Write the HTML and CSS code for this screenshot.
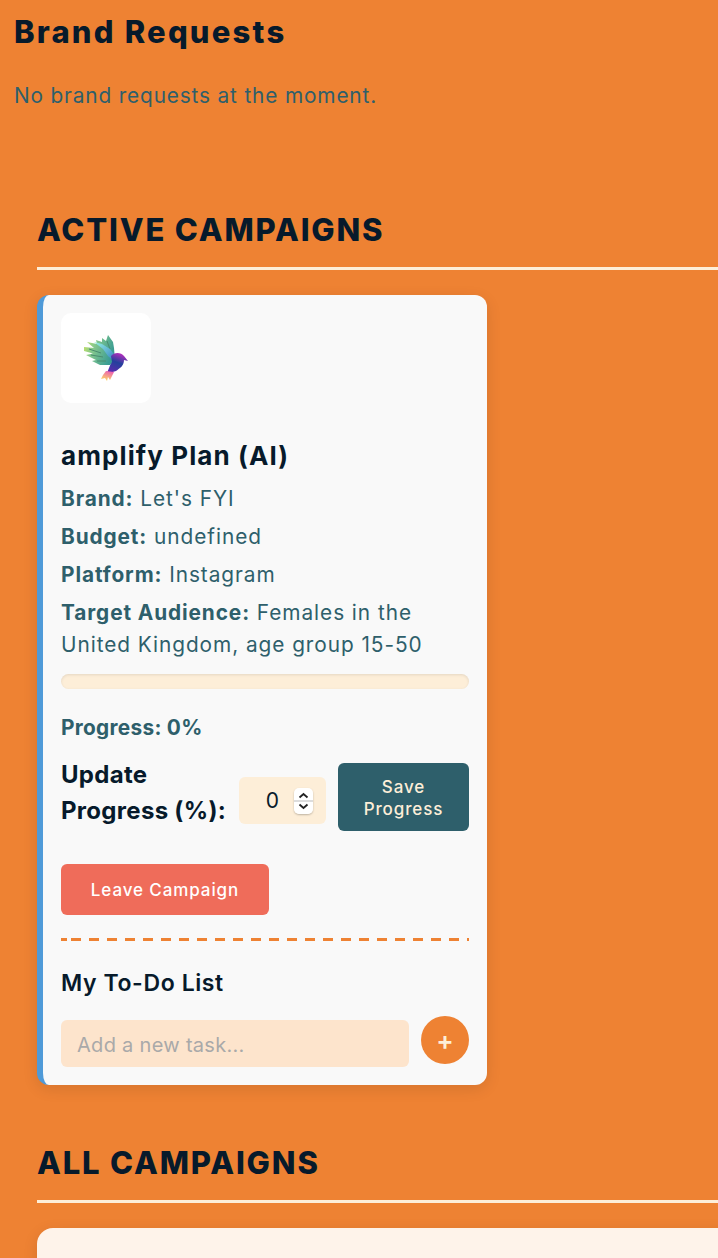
FILE: index.html
```html
<!DOCTYPE html>
<html lang="en">
<head>
    <meta charset="UTF-8">
    <meta name="viewport" content="width=device-width, initial-scale=1.0">
    <title>Influencer Dashboard</title>
    <link rel="stylesheet" href="styles.css">
</head>
<body>
<div class="requests">
    <h2>Brand Requests</h2>
    <p>No brand requests at the moment.</p>
</div>

<section class="section active">
    <h2 class="section-title">ACTIVE CAMPAIGNS</h2>
    <div class="campaign-card">
        <div class="logo">
            <svg width="46" height="46" viewBox="0 0 46 46">
                <defs>
                    <linearGradient id="wing" x1="0" y1="0" x2="1" y2="0.4">
                        <stop offset="0" stop-color="#d8ea5c"/>
                        <stop offset="0.4" stop-color="#86c88c"/>
                        <stop offset="1" stop-color="#3a9c94"/>
                    </linearGradient>
                    <linearGradient id="band" x1="0" y1="0" x2="1" y2="1">
                        <stop offset="0" stop-color="#96f4e4"/>
                        <stop offset="1" stop-color="#2f78c0"/>
                    </linearGradient>
                    <linearGradient id="body" x1="0.7" y1="0" x2="0.3" y2="1">
                        <stop offset="0" stop-color="#c02cc0"/>
                        <stop offset="0.45" stop-color="#23409c"/>
                        <stop offset="1" stop-color="#6428b0"/>
                    </linearGradient>
                    <linearGradient id="tail" x1="0.7" y1="0" x2="0.3" y2="1">
                        <stop offset="0" stop-color="#ec5cb4"/>
                        <stop offset="1" stop-color="#fde060"/>
                    </linearGradient>
                </defs>
                <path fill="url(#wing)" d="M1 12 L11 13 L4 7 L14 9 L13 5 L19 7 L19 3 L23 6 L25 0 L30 7 L31 13 L32 25 L27 30 L17 30 L9 26 L13 25 L3 20 L10 18.500 L1 16 Z"/>
                <path d="M6 14 L18 18 M8 20 L20 22 M14 26 L23 26 M17 9 L25 17 M24 6 L27 14" fill="none" stroke="#4a8c70" stroke-width="1"/>
                <path fill="url(#band)" d="M11 7 L19 9 L27 14 L33 22 L32 27 L25 21 L20 14 Z"/>
                <path fill="url(#body)" d="M28 21 C31 17 38 17 41 21 L45 26 L41 25 C41 31 37 33 33 36 L23 39 C26 35 26 31 29 27 Z"/>
                <path fill="url(#tail)" d="M23 36 L31 37 L29 41 L27 45 L25 42 L24 46 L22 43 L18 44 L20 40 Z"/>
            </svg>
        </div>
        <h3 class="campaign-title">amplify Plan (AI)</h3>
        <p class="detail"><strong>Brand:</strong> Let's FYI</p>
        <p class="detail"><strong>Budget:</strong> undefined</p>
        <p class="detail"><strong>Platform:</strong> Instagram</p>
        <p class="detail"><strong>Target Audience:</strong> Females in the United Kingdom, age group 15-50</p>
        <div class="progress-bar"></div>
        <p class="progress-text">Progress: 0%</p>
        <div class="update-row">
            <label class="update-label" for="progress">Update Progress (%):</label>
            <div class="number-box">
                <input id="progress" class="number-input" type="number" value="0">
                <span class="stepper">
                    <svg width="19" height="26" viewBox="0 0 19 26">
                        <path d="M5.5 9.5 L9.5 6 L13.5 9.5 M5.5 16.5 L9.500 20 L13.5 16.5" fill="none" stroke="#222" stroke-width="1.8"/>
                    </svg>
                </span>
            </div>
            <button class="btn save-btn">Save Progress</button>
        </div>
        <button class="btn leave-btn">Leave Campaign</button>
        <div class="todo">
            <h4 class="todo-title">My To-Do List</h4>
            <div class="todo-row">
                <input class="todo-input" type="text" placeholder="Add a new task...">
                <button class="add-btn">+</button>
            </div>
        </div>
    </div>
</section>

<section class="section all">
    <h2 class="section-title">ALL CAMPAIGNS</h2>
    <div class="all-panel"></div>
</section>
</body>
</html>
```

FILE: styles.css
```css
html, body {
    height: 1258px;
    overflow: hidden;
}

body {
    margin: 0;
    background-color: #ee8233;
    font-family: "Inter", sans-serif;
    color: #2e5f6b;
}

h2, h3, h4, p {
    margin: 0;
}

.requests {
    padding: 10px 14px 0;
}

.requests h2 {
    font-size: 31px;
    line-height: 44px;
    font-weight: 800;
    letter-spacing: 2.2px;
    color: #071a2b;
}

.requests p {
    margin-top: 26px;
    font-size: 20.8px;
    line-height: 32px;
    letter-spacing: 0.85px;
}

.section {
    margin-left: 37px;
}

.active {
    margin-top: 94px;
}

.all {
    margin-top: 54px;
}

.section-title {
    font-size: 31px;
    line-height: 48px;
    font-weight: 800;
    letter-spacing: 1.85px;
    color: #071a2b;
    padding-bottom: 13px;
    border-bottom: 3px solid #fdeed8;
    margin-bottom: 25px;
}

.campaign-card {
    width: 450px;
    box-sizing: border-box;
    padding: 18px;
    border-left: 6px solid #4f9ad8;
    border-radius: 12px;
    background-color: #f9f9f9;
    box-shadow: 0 4px 15px rgba(0, 0, 0, 0.1);
}

.logo {
    width: 90px;
    height: 90px;
    border-radius: 10px;
    background-color: #fff;
    display: flex;
    align-items: center;
    justify-content: center;
}

.campaign-title {
    margin-top: 34px;
    font-size: 26px;
    line-height: 38px;
    font-weight: 700;
    letter-spacing: 1.1px;
    color: #071a2b;
}

.campaign-title + .detail {
    margin-top: 8px;
}

.detail {
    margin-top: 6px;
    font-size: 20.8px;
    line-height: 32px;
    letter-spacing: 0.95px;
}

.detail strong {
    letter-spacing: 0.9px;
}

.progress-bar {
    margin-top: 13px;
    height: 15px;
    border-radius: 8px;
    background-color: #fdeed8;
    box-shadow: inset 0 1px 3px rgba(0, 0, 0, 0.1);
}

.progress-text {
    margin-top: 23px;
    font-size: 20.8px;
    line-height: 32px;
    font-weight: 700;
    letter-spacing: 0.3px;
}

.update-row {
    margin-top: 13px;
    display: flex;
    align-items: flex-start;
    gap: 12px;
}

.update-label {
    width: 166px;
    font-size: 24px;
    line-height: 36px;
    font-weight: 700;
    letter-spacing: 0.3px;
    color: #071a2b;
}

.number-box {
    margin-top: 20px;
    width: 87px;
    height: 47px;
    border-radius: 6px;
    background-color: #fdeed8;
    display: flex;
    align-items: center;
    padding-right: 13px;
    box-sizing: border-box;
}

.number-input {
    width: 55px;
    border: none;
    background: none;
    padding: 0;
    box-sizing: border-box;
    text-align: right;
    font-family: "Inter", sans-serif;
    font-size: 21px;
    color: #071a2b;
    appearance: textfield;
    outline: none;
}

.stepper {
    width: 19px;
    height: 26px;
    border-radius: 5px;
    background: linear-gradient(#fff 0 46%, #ddd 46% 54%, #fff 54%);
    box-shadow: 0 1px 2px rgba(0, 0, 0, 0.25);
    display: block;
}

.stepper svg {
    display: block;
}

.btn {
    border: none;
    border-radius: 6px;
    font-family: "Inter", sans-serif;
    font-size: 17px;
    font-weight: 500;
    letter-spacing: 0.9px;
}

.save-btn {
    margin-top: 6px;
    width: 131px;
    height: 68px;
    line-height: 22px;
    padding: 2px 10px 0;
    background-color: #2e5f6b;
    color: #fdeed8;
}

.leave-btn {
    display: block;
    margin-top: 33px;
    width: 208px;
    height: 51px;
    background-color: #ef6c5a;
    color: #fff;
}

.todo {
    margin-top: 23px;
    padding-top: 28px;
    background-image:
        linear-gradient(to right, #ee8233 6px, #f9f9f9 6px, #f9f9f9 10px, transparent 10px),
        linear-gradient(to right, #ee8233 10px, transparent 10px);
    background-size: 10px 3px, 18px 3px;
    background-position: 0 0, 10px 0;
    background-repeat: no-repeat, repeat-x;
}

.todo-title {
    font-size: 23px;
    line-height: 34px;
    font-weight: 600;
    letter-spacing: 0.6px;
    color: #071a2b;
}

.todo-row {
    margin-top: 16px;
    display: flex;
    align-items: flex-end;
    gap: 12px;
}

.todo-input {
    flex: 1;
    min-width: 0;
    height: 47px;
    box-sizing: border-box;
    padding: 3px 16px 0;
    border: none;
    border-radius: 6px;
    background-color: #fde4cc;
    font-family: "Inter", sans-serif;
    font-size: 20px;
    letter-spacing: 0.3px;
    color: #071a2b;
    outline: none;
}

.todo-input::placeholder {
    color: #a9a9a9;
}

.add-btn {
    width: 48px;
    height: 48px;
    margin-bottom: 3px;
    padding: 0;
    border: none;
    border-radius: 50%;
    background-color: #ee8233;
    color: #fdeed8;
    font-family: "Inter", sans-serif;
    font-size: 26px;
    font-weight: 600;
}

.all-panel {
    width: 800px;
    height: 200px;
    border-radius: 16px;
    background-color: #fef3ea;
    box-shadow: 0 4px 15px rgba(0, 0, 0, 0.1);
}
```
